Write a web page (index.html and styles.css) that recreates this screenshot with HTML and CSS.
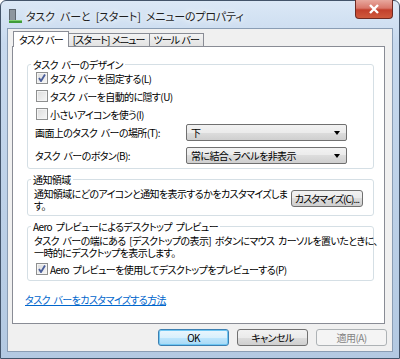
FILE: index.html
```html
<!DOCTYPE html>
<html lang="ja">
<head>
  <meta charset="UTF-8" />
  <title>タスク バーと [スタート] メニューのプロパティ</title>
  <link rel="stylesheet" href="styles.css">
</head>
<body>
  <div class="window">
    <div class="titlebar">
      <svg class="app-icon" width="16" height="16" viewBox="0 0 16 16">
        <rect x="2" y="1" width="7" height="13" fill="#5d6670"/>
        <rect x="3" y="2" width="5" height="11" fill="#8d969f"/>
        <rect x="2" y="12" width="13" height="3" fill="#3f9b3a"/>
        <rect x="2" y="12" width="13" height="1" fill="#7fcf6f"/>
      </svg>
      <span class="title">タスク バーと [スタート] メニューのプロパティ</span>
      <button class="close">
        <svg width="12" height="10" viewBox="0 0 12 10"><path d="M2 1 L10 9 M10 1 L2 9" stroke="#fff" stroke-width="2.4"/></svg>
      </button>
    </div>

    <div class="client">
      <div class="tabs">
        <div class="tab active">タスク バー</div>
        <div class="tab">[スタート] メニュー</div>
        <div class="tab">ツール バー</div>
      </div>

      <div class="panel">
        <fieldset class="group design">
          <legend>タスク バーのデザイン</legend>
          <label class="check"><span class="box checked"></span>タスク バーを固定する(L)</label>
          <label class="check"><span class="box"></span>タスク バーを自動的に隠す(U)</label>
          <label class="check"><span class="box"></span>小さいアイコンを使う(I)</label>
          <div class="field first">
            <span class="field-label">画面上のタスク バーの場所(T):</span>
            <div class="combo">下</div>
          </div>
          <div class="field">
            <span class="field-label">タスク バーのボタン(B):</span>
            <div class="combo">常に結合、ラベルを非表示</div>
          </div>
        </fieldset>

        <fieldset class="group notify">
          <legend>通知領域</legend>
          <div class="notify-row">
            <div class="desc">
              <div class="line">通知領域にどのアイコンと通知を表示するかをカスタマイズしま</div>
              <div class="line">す。</div>
            </div>
            <button class="btn customize">カスタマイズ(C)...</button>
          </div>
        </fieldset>

        <fieldset class="group aero">
          <legend>Aero プレビューによるデスクトップ プレビュー</legend>
          <div class="desc">
            <div class="line">タスク バーの端にある [デスクトップの表示] ボタンにマウス カーソルを置いたときに、</div>
            <div class="line">一時的にデスクトップを表示します。</div>
          </div>
          <label class="check"><span class="box checked"></span>Aero プレビューを使用してデスクトップをプレビューする(P)</label>
        </fieldset>

        <a class="help" href="#">タスク バーをカスタマイズする方法</a>
      </div>

      <div class="buttons">
        <button class="btn default">OK</button>
        <button class="btn">キャンセル</button>
        <button class="btn disabled">適用(A)</button>
      </div>
    </div>
  </div>
</body>
</html>
```

FILE: styles.css
```css
* { box-sizing: border-box; }
body {
  margin: 0;
  font-family: "Noto Sans CJK JP", "Noto Sans", sans-serif;
  font-size: 10px;
  font-feature-settings: "palt";
  letter-spacing: -0.6px;
  word-spacing: 2px;
  color: #000;
}
.window {
  width: 400px;
  height: 359px;
  border: 1px solid #43546a;
  border-radius: 6px 6px 0 0;
  background: linear-gradient(180deg, #dbe8f6 0%, #c7d9ee 12%, #bcd0e7 60%, #b3c9e2 100%);
  display: flex;
  flex-direction: column;
}
.titlebar {
  height: 27px;
  display: flex;
  align-items: center;
  padding-left: 6px;
}
.app-icon {
  margin-top: 3px;
}
.title {
  margin-left: 3px;
  margin-top: 3px;
  font-size: 11px;
  letter-spacing: -0.2px;
  word-spacing: 3px;
  color: #1e1e1e;
  text-shadow: 0 0 5px #fff, 0 0 8px #fff;
}
.close {
  margin-left: auto;
  margin-right: 6px;
  align-self: flex-start;
  margin-top: -1px;
  width: 38px;
  height: 19px;
  border: 1px solid #6e2a22;
  border-top: none;
  border-radius: 0 0 4px 4px;
  background: linear-gradient(180deg, #e8a89e 0%, #d9776a 45%, #c2402c 55%, #cf5a3d 100%);
  display: flex;
  align-items: center;
  justify-content: center;
  padding: 0;
}
.client {
  flex: 1;
  margin: 0 6px 6px 6px;
  border: 1px solid #8a9db4;
  background: #f0f0f0;
  padding: 2px 7px 0 4px;
  display: flex;
  flex-direction: column;
}
.tabs {
  display: flex;
  align-items: flex-end;
  height: 15px;
  padding-left: 1px;
}
.tab {
  height: 13px;
  line-height: 12px;
  padding: 0 4px;
  border: 1px solid #898c95;
  border-bottom: none;
  background: linear-gradient(180deg, #f3f3f3, #e2e2e2);
  margin-left: -1px;
  white-space: nowrap;
  letter-spacing: -0.9px;
  word-spacing: 1px;
}
.tab.active {
  height: 16px;
  line-height: 15px;
  padding: 0 5px;
  background: #fff;
  margin-bottom: -1px;
  position: relative;
  z-index: 1;
  margin-left: 0;
}
.panel {
  height: 278px;
  border: 1px solid #898c95;
  background: #fff;
  padding: 11px 10px 0 14px;
  display: flex;
  flex-direction: column;
}
.group {
  margin: 0;
  border: 1px solid #d5dfe5;
  border-radius: 3px;
  padding: 0 8px;
  min-width: 0;
}
.group legend {
  padding: 0 2px;
  margin-left: -5px;
  height: 13px;
  line-height: 13px;
}
.check {
  display: flex;
  align-items: center;
  height: 18px;
  white-space: nowrap;
}
.design legend {
  margin-bottom: -2px;
}
.box {
  width: 12px;
  height: 12px;
  border: 1px solid #8e8f8f;
  background: linear-gradient(135deg, #dcdcdc, #f6f6f6);
  box-shadow: inset 0 0 0 1px #f4f4f4;
  margin-right: 2px;
  flex-shrink: 0;
}
.box.checked {
  background: url("data:image/svg+xml,%3Csvg xmlns='http://www.w3.org/2000/svg' width='10' height='10'%3E%3Cpath d='M2 5 L4 8 L8 1.5' fill='none' stroke='%234a5e9a' stroke-width='1.8'/%3E%3C/svg%3E") center no-repeat, linear-gradient(135deg, #dcdcdc, #f6f6f6);
}
.field {
  display: flex;
  align-items: center;
  height: 17px;
  margin-top: 6px;
  margin-left: -1px;
}
.field.first {
  margin-top: 1px;
}
.field-label {
  width: 151px;
  white-space: nowrap;
}
.combo {
  width: 161px;
  height: 17px;
  line-height: 15px;
  padding-left: 4px;
  border: 1px solid #707070;
  border-radius: 2px;
  background: linear-gradient(180deg, #f2f2f2 0%, #ebebeb 50%, #dddddd 50%, #cfcfcf 100%);
  position: relative;
  white-space: nowrap;
}
.combo::after {
  content: "";
  position: absolute;
  right: 6px;
  top: 6px;
  border-left: 3.5px solid transparent;
  border-right: 3.5px solid transparent;
  border-top: 4px solid #000;
}
.design {
  padding-bottom: 4px;
}
.notify {
  margin-top: 4px;
  padding-bottom: 3px;
}
.notify-row {
  display: flex;
  align-items: flex-start;
  justify-content: space-between;
  padding-right: 2px;
}
.desc {
  margin: 2px 0 0 -2px;
  white-space: nowrap;
}
.desc .line {
  height: 12px;
  line-height: 12px;
}
.btn {
  font: inherit;
  letter-spacing: -0.6px;
  color: #000;
  height: 17px;
  line-height: 14px;
  padding: 0 2px;
  border: 1px solid #707070;
  border-radius: 3px;
  background: linear-gradient(180deg, #f2f2f2 0%, #ebebeb 50%, #dddddd 50%, #cfcfcf 100%);
  white-space: nowrap;
}
.customize {
  margin-top: 4px;
  width: 72px;
  letter-spacing: -0.9px;
}
.aero {
  margin-top: 4px;
  padding-bottom: 2px;
}
.aero .check {
  margin-top: 1px;
}
.help {
  margin-top: 12px;
  margin-left: -2px;
  color: #0066cc;
  text-decoration: underline;
  line-height: 14px;
  align-self: flex-start;
}
.buttons {
  display: flex;
  justify-content: flex-end;
  gap: 8px;
  padding-top: 5px;
  margin-right: -2px;
}
.buttons .btn {
  width: 71px;
}
.btn.default {
  border-color: #3c7fb1;
  background: linear-gradient(180deg, #eaf6fd 0%, #d9f0fc 50%, #bee6fd 50%, #a7d9f5 100%);
  box-shadow: inset 0 0 0 1px #6fc7f3;
}
.btn.disabled {
  color: #838383;
  border-color: #adb2b5;
  background: #f4f4f4;
}
```
